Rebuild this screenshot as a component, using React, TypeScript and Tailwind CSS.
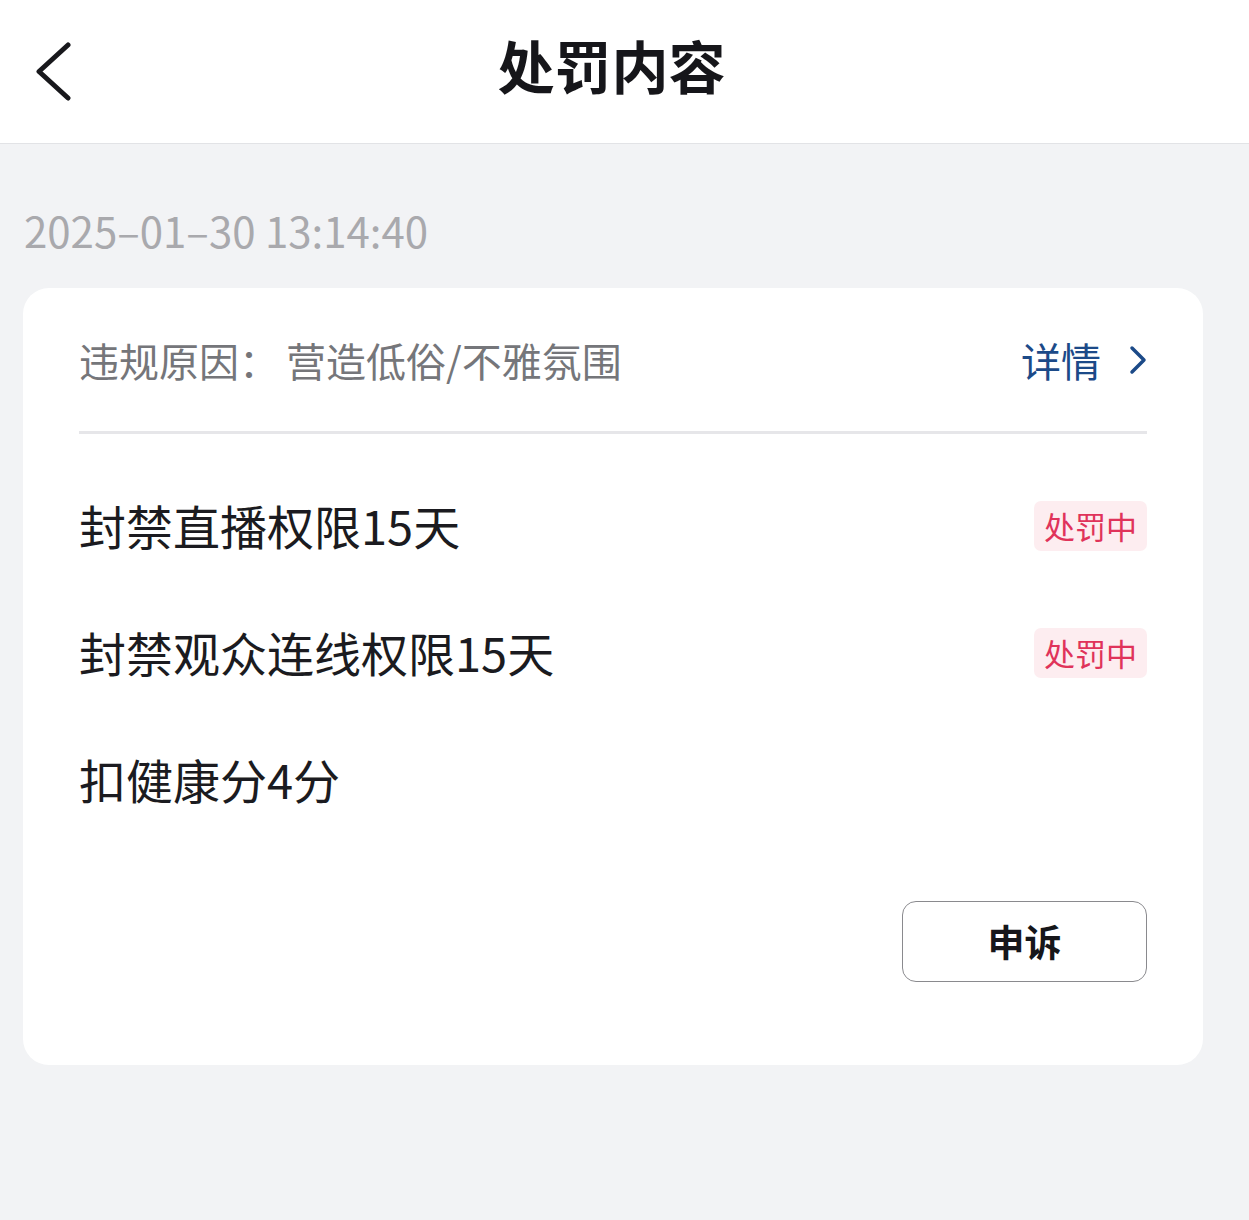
import React from 'react';

const items = [
  { text: '封禁直播权限15天', active: true },
  { text: '封禁观众连线权限15天', active: true },
  { text: '扣健康分4分', active: false },
];

const App: React.FC = () => {
  return (
    <div
      className="min-h-[1220px] bg-[#f2f3f5]"
      style={{ fontFamily: '"Noto Sans CJK SC", "Noto Sans", sans-serif' }}
    >
      {/* Header */}
      <header className="h-[144px] bg-white border-b border-[#e2e3e6] grid grid-cols-[1fr_auto_1fr] items-center">
        <div className="pl-[33px]">
          <svg width="40" height="60" viewBox="0 0 40 60" fill="none">
            <path d="M35 3 L6 29.5 L35 56" stroke="#18181c" strokeWidth="5" strokeLinecap="round" strokeLinejoin="round" />
          </svg>
        </div>
        <h1 className="text-[57px] leading-none font-bold text-[#16161a] pb-[14px] pr-[26px]">处罚内容</h1>
        <div />
      </header>

      <main className="px-[23px] pr-[46px]">
        <div className="pt-[59px] pb-[32px] pl-[1px] text-[42px] leading-[53px] text-[#a9a9ad]">
          2025–01–30 13:14:40
        </div>

        {/* Card */}
        <section className="bg-white rounded-[26px] px-[56px] pb-[83px]">
          <div className="h-[143px] flex items-center justify-between">
            <p className="text-[40px] text-[#75767a]">
              违规原因：<span className="ml-[7px]">营造低俗/不雅氛围</span>
            </p>
            <div className="flex items-center gap-[28px] text-[40px] text-[#1c4a88]">
              <span>详情</span>
              <svg width="18" height="30" viewBox="0 0 18 30" fill="none">
                <path d="M3 3 L15 15 L3 27" stroke="#1c4a88" strokeWidth="3.5" strokeLinecap="round" strokeLinejoin="round" />
              </svg>
            </div>
          </div>
          <div className="h-[3px] bg-[#e6e6e9]" />

          <div className="pt-[28px]">
            {items.map((item) => (
              <div key={item.text} className="h-[127px] flex items-center justify-between">
                <span className="text-[47px] text-[#1b1b20]">{item.text}</span>
                {item.active && (
                  <span className="h-[50px] px-[10px] rounded-[7px] bg-[#fdedf0] text-[#e0335a] text-[31px] leading-[50px]">
                    处罚中
                  </span>
                )}
              </div>
            ))}
          </div>

          <div className="mt-[58px] flex justify-end">
            <button className="w-[245px] h-[81px] rounded-[14px] border-[1.5px] border-[#8a8a8e] bg-white text-[37px] font-bold text-[#16161a]">
              申诉
            </button>
          </div>
        </section>
      </main>
    </div>
  );
};

export default App;
